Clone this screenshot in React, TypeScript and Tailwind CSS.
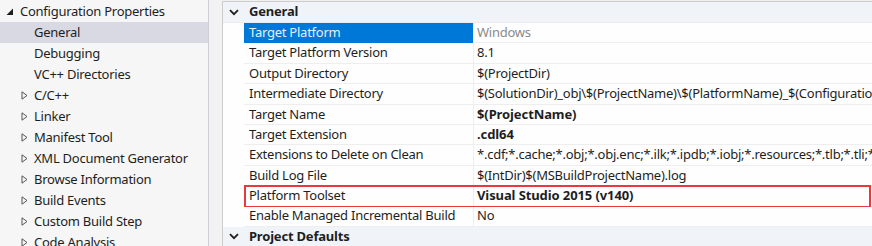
import React from "react";

const font = { fontFamily: '"Noto Sans", "Open Sans", sans-serif' };

type Item = { label: string; level: 0 | 1 | 2; selected?: boolean };

const tree: Item[] = [
  { label: "Configuration Properties", level: 0 },
  { label: "General", level: 1, selected: true },
  { label: "Debugging", level: 1 },
  { label: "VC++ Directories", level: 1 },
  { label: "C/C++", level: 2 },
  { label: "Linker", level: 2 },
  { label: "Manifest Tool", level: 2 },
  { label: "XML Document Generator", level: 2 },
  { label: "Browse Information", level: 2 },
  { label: "Build Events", level: 2 },
  { label: "Custom Build Step", level: 2 },
  { label: "Code Analysis", level: 2 },
];

type Prop = { name: string; value: string; bold?: boolean; selected?: boolean; boxed?: boolean };

const props: Prop[] = [
  { name: "Target Platform", value: "Windows", selected: true },
  { name: "Target Platform Version", value: "8.1" },
  { name: "Output Directory", value: "$(ProjectDir)" },
  { name: "Intermediate Directory", value: "$(SolutionDir)_obj\\$(ProjectName)\\$(PlatformName)_$(Configuration)\\" },
  { name: "Target Name", value: "$(ProjectName)", bold: true },
  { name: "Target Extension", value: ".cdl64", bold: true },
  { name: "Extensions to Delete on Clean", value: "*.cdf;*.cache;*.obj;*.obj.enc;*.ilk;*.ipdb;*.iobj;*.resources;*.tlb;*.tli;*.tlh;*.tmp;*.rsp" },
  { name: "Build Log File", value: "$(IntDir)$(MSBuildProjectName).log" },
  { name: "Platform Toolset", value: "Visual Studio 2015 (v140)", bold: true, boxed: true },
  { name: "Enable Managed Incremental Build", value: "No" },
];

function Chevron() {
  return (
    <svg width="10" height="7" viewBox="0 0 10 7" className="shrink-0">
      <path d="M1 1.2 L5 5.2 L9 1.2" fill="none" stroke="#1e1e1e" strokeWidth="1.8" />
    </svg>
  );
}

function TreeRow({ item }: { item: Item }) {
  return (
    <div
      className={`flex items-center h-[21px] text-[13px] tracking-[-0.25px] whitespace-nowrap text-[#1e1e1e] ${
        item.selected ? "bg-[#d9d9e3]" : ""
      }`}
    >
      {item.level === 0 && (
        <>
          <svg width="8" height="8" viewBox="0 0 8 8" className="ml-[6px] mr-[6px]">
            <path d="M7 0.5 L7 7 L0.5 7 Z" fill="#1e1e1e" />
          </svg>
          <span>{item.label}</span>
        </>
      )}
      {item.level === 1 && <span className="ml-[34px]">{item.label}</span>}
      {item.level === 2 && (
        <>
          <svg width="7" height="9" viewBox="0 0 7 9" className="ml-[21px] mr-[6px]">
            <path d="M1 0.8 L6 4.5 L1 8.2 Z" fill="none" stroke="#555" strokeWidth="1" />
          </svg>
          <span>{item.label}</span>
        </>
      )}
    </div>
  );
}

function Header({ label }: { label: string }) {
  return (
    <div className="flex items-center h-[21px] bg-[#f0f4f9] border-b border-[#e8ecf2]">
      <div className="w-[21px] flex justify-center pl-[1px]">
        <Chevron />
      </div>
      <span className="ml-[5px] text-[13px] tracking-[-0.2px] font-bold text-[#1e1e1e]">{label}</span>
    </div>
  );
}

function PropRow({ p }: { p: Prop }) {
  return (
    <div className="relative flex h-[20.4px] bg-[#fefefe] text-[13px] tracking-[-0.25px]">
      <div className="w-[21px] shrink-0" />
      <div
        className={`w-[229px] shrink-0 flex items-center pl-[5px] whitespace-nowrap overflow-hidden border-b ${
          p.selected ? "bg-[#0078d7] text-[#e6f0fa] border-[#0078d7]" : "text-[#1e1e1e] border-[#eeeeee]"
        }`}
      >
        {p.name}
      </div>
      <div
        className={`flex-1 min-w-0 flex items-center pl-[3px] whitespace-nowrap overflow-hidden border-b border-l border-[#eeeeee] ${
          p.bold ? "font-bold tracking-[-0.1px]" : ""
        } ${p.selected ? "text-[#8a8a8a]" : "text-[#1e1e1e]"}`}
      >
        {p.value}
      </div>
      {p.boxed && (
        <div className="absolute left-[21px] right-[1px] top-[-1px] bottom-[-1px] border-2 border-[#e8393c] pointer-events-none" />
      )}
    </div>
  );
}

export default function App() {
  return (
    <div className="w-[872px] h-[246px] flex overflow-hidden bg-[#f0f0f0]" style={font}>
      {/* Left tree */}
      <div className="w-[209px] shrink-0 bg-[#f6f6f6] border-r border-[#cfcfd6] pt-[1px]">
        {tree.map((t) => (
          <TreeRow key={t.label} item={t} />
        ))}
      </div>

      {/* Splitter gap */}
      <div className="w-[13px] shrink-0 bg-[#f2f2f2]" />

      {/* Property grid */}
      <div className="flex-1 min-w-0 bg-[#fefefe] border-l border-t border-[#cccccc] mt-[1px]">
        <Header label="General" />
        {props.map((p) => (
          <PropRow key={p.name} p={p} />
        ))}
        <Header label="Project Defaults" />
      </div>
    </div>
  );
}
